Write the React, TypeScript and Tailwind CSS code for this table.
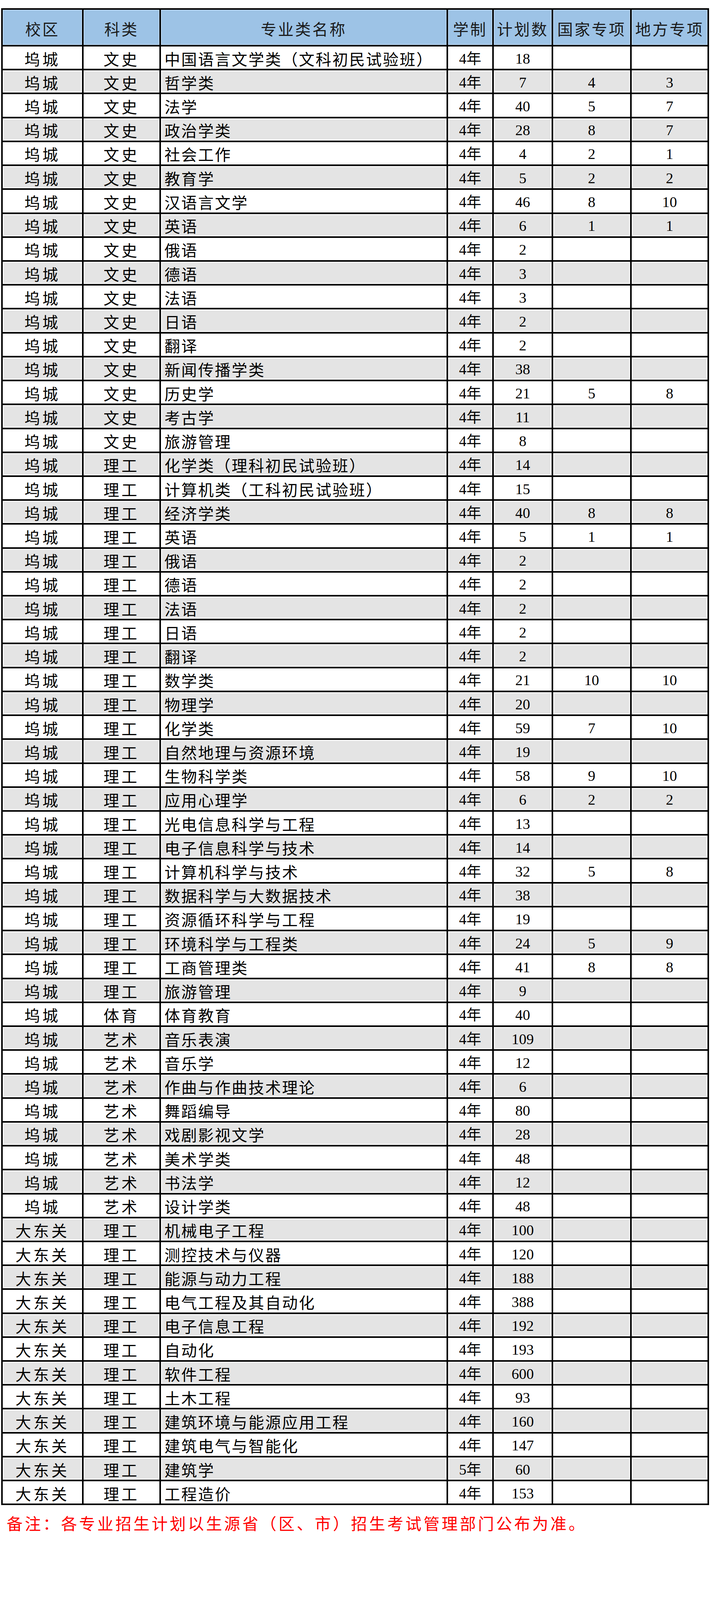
type Row = [string, string, string, string, string, string, string];

const rows: Row[] = [
  ['坞城', '文史', '中国语言文学类（文科初民试验班）', '4年', '18', '', ''],
  ['坞城', '文史', '哲学类', '4年', '7', '4', '3'],
  ['坞城', '文史', '法学', '4年', '40', '5', '7'],
  ['坞城', '文史', '政治学类', '4年', '28', '8', '7'],
  ['坞城', '文史', '社会工作', '4年', '4', '2', '1'],
  ['坞城', '文史', '教育学', '4年', '5', '2', '2'],
  ['坞城', '文史', '汉语言文学', '4年', '46', '8', '10'],
  ['坞城', '文史', '英语', '4年', '6', '1', '1'],
  ['坞城', '文史', '俄语', '4年', '2', '', ''],
  ['坞城', '文史', '德语', '4年', '3', '', ''],
  ['坞城', '文史', '法语', '4年', '3', '', ''],
  ['坞城', '文史', '日语', '4年', '2', '', ''],
  ['坞城', '文史', '翻译', '4年', '2', '', ''],
  ['坞城', '文史', '新闻传播学类', '4年', '38', '', ''],
  ['坞城', '文史', '历史学', '4年', '21', '5', '8'],
  ['坞城', '文史', '考古学', '4年', '11', '', ''],
  ['坞城', '文史', '旅游管理', '4年', '8', '', ''],
  ['坞城', '理工', '化学类（理科初民试验班）', '4年', '14', '', ''],
  ['坞城', '理工', '计算机类（工科初民试验班）', '4年', '15', '', ''],
  ['坞城', '理工', '经济学类', '4年', '40', '8', '8'],
  ['坞城', '理工', '英语', '4年', '5', '1', '1'],
  ['坞城', '理工', '俄语', '4年', '2', '', ''],
  ['坞城', '理工', '德语', '4年', '2', '', ''],
  ['坞城', '理工', '法语', '4年', '2', '', ''],
  ['坞城', '理工', '日语', '4年', '2', '', ''],
  ['坞城', '理工', '翻译', '4年', '2', '', ''],
  ['坞城', '理工', '数学类', '4年', '21', '10', '10'],
  ['坞城', '理工', '物理学', '4年', '20', '', ''],
  ['坞城', '理工', '化学类', '4年', '59', '7', '10'],
  ['坞城', '理工', '自然地理与资源环境', '4年', '19', '', ''],
  ['坞城', '理工', '生物科学类', '4年', '58', '9', '10'],
  ['坞城', '理工', '应用心理学', '4年', '6', '2', '2'],
  ['坞城', '理工', '光电信息科学与工程', '4年', '13', '', ''],
  ['坞城', '理工', '电子信息科学与技术', '4年', '14', '', ''],
  ['坞城', '理工', '计算机科学与技术', '4年', '32', '5', '8'],
  ['坞城', '理工', '数据科学与大数据技术', '4年', '38', '', ''],
  ['坞城', '理工', '资源循环科学与工程', '4年', '19', '', ''],
  ['坞城', '理工', '环境科学与工程类', '4年', '24', '5', '9'],
  ['坞城', '理工', '工商管理类', '4年', '41', '8', '8'],
  ['坞城', '理工', '旅游管理', '4年', '9', '', ''],
  ['坞城', '体育', '体育教育', '4年', '40', '', ''],
  ['坞城', '艺术', '音乐表演', '4年', '109', '', ''],
  ['坞城', '艺术', '音乐学', '4年', '12', '', ''],
  ['坞城', '艺术', '作曲与作曲技术理论', '4年', '6', '', ''],
  ['坞城', '艺术', '舞蹈编导', '4年', '80', '', ''],
  ['坞城', '艺术', '戏剧影视文学', '4年', '28', '', ''],
  ['坞城', '艺术', '美术学类', '4年', '48', '', ''],
  ['坞城', '艺术', '书法学', '4年', '12', '', ''],
  ['坞城', '艺术', '设计学类', '4年', '48', '', ''],
  ['大东关', '理工', '机械电子工程', '4年', '100', '', ''],
  ['大东关', '理工', '测控技术与仪器', '4年', '120', '', ''],
  ['大东关', '理工', '能源与动力工程', '4年', '188', '', ''],
  ['大东关', '理工', '电气工程及其自动化', '4年', '388', '', ''],
  ['大东关', '理工', '电子信息工程', '4年', '192', '', ''],
  ['大东关', '理工', '自动化', '4年', '193', '', ''],
  ['大东关', '理工', '软件工程', '4年', '600', '', ''],
  ['大东关', '理工', '土木工程', '4年', '93', '', ''],
  ['大东关', '理工', '建筑环境与能源应用工程', '4年', '160', '', ''],
  ['大东关', '理工', '建筑电气与智能化', '4年', '147', '', ''],
  ['大东关', '理工', '建筑学', '5年', '60', '', ''],
  ['大东关', '理工', '工程造价', '4年', '153', '', ''],
];

const headers = ['校区', '科类', '专业类名称', '学制', '计划数', '国家专项', '地方专项'];

// widths include each cell's right border
const cols = 'grid grid-cols-[207px_198px_735px_117px_152px_201px_198px]';
const cell =
  'flex h-full items-center overflow-hidden whitespace-nowrap border-r-4 border-b-4 border-black leading-none';
const cjk = "font-['Noto_Sans_CJK_SC',sans-serif] text-[40px]";
const num = "font-['Liberation_Serif','Noto_Sans_CJK_SC',serif] text-[38px]";

export default function App() {
  return (
    <div className="w-[1820px] bg-white pl-[3px] pt-[21px] text-black">
      <div className="w-[1812px] border-l-4 border-t-4 border-black">
        {/* header */}
        <div className={`${cols} h-[94px] grid-rows-[94px] bg-[#9dc3e6]`}>
          {headers.map((h) => (
            <div
              className={`${cell} ${cjk} justify-center pt-[6px] tracking-[4px] text-[#1a1a1a] shadow-[inset_0_0_0_2px_#b7d4ef]`}
              key={h}
            >
              {h}
            </div>
          ))}
        </div>

        {rows.map((r, i) => {
          const grey = i % 2 === 1;
          const bg = grey
            ? 'bg-[#e4e4e4] shadow-[inset_0_0_0_3px_#f3f3f3]'
            : 'bg-white';
          return (
            <div className={`${cols} h-[61.22px] grid-rows-[61.22px]`} key={i}>
              <div
                className={`${cell} ${cjk} ${bg} justify-center pt-[4px] tracking-[6px]`}
              >
                {r[0]}
              </div>
              <div
                className={`${cell} ${cjk} ${bg} justify-center pt-[4px] tracking-[6px]`}
              >
                {r[1]}
              </div>
              <div
                className={`${cell} ${cjk} ${bg} pl-[9px] pt-[4px] tracking-[3px]`}
              >
                {r[2]}
              </div>
              <div className={`${cell} ${num} ${bg} justify-center pt-[4px]`}>
                {r[3]}
              </div>
              <div className={`${cell} ${num} ${bg} justify-center pt-[4px]`}>
                {r[4]}
              </div>
              <div className={`${cell} ${num} ${bg} justify-center pt-[4px]`}>
                {r[5]}
              </div>
              <div className={`${cell} ${num} ${bg} justify-center pt-[4px]`}>
                {r[6]}
              </div>
            </div>
          );
        })}
      </div>

      <p className="ml-[14px] mt-[20px] whitespace-nowrap font-['Noto_Sans_CJK_SC',sans-serif] text-[41px] leading-[50px] tracking-[5.4px] text-[#ff0000]">
        备注：各专业招生计划以生源省（区、市）招生考试管理部门公布为准。
      </p>
    </div>
  );
}
